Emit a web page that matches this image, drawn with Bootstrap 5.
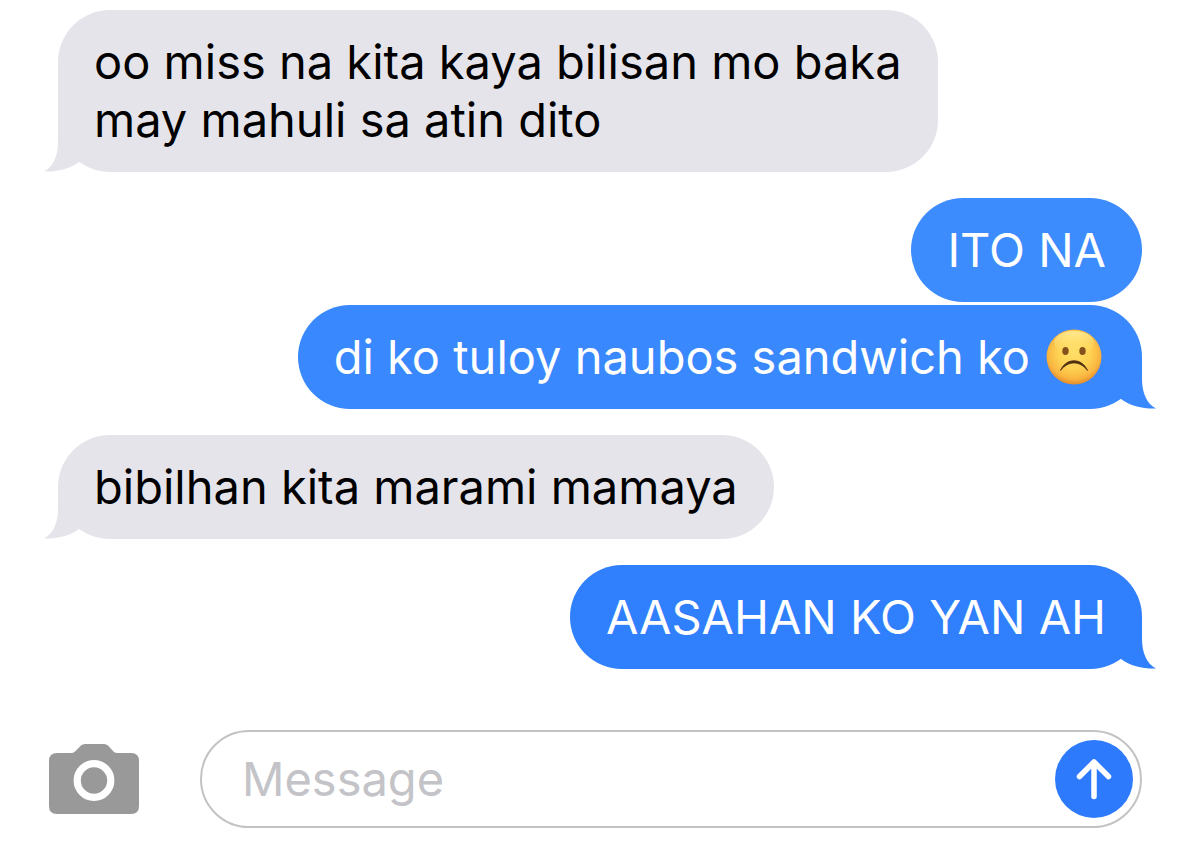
<!DOCTYPE html>
<html lang="tl"><head><meta charset="utf-8"><meta name="viewport" content="width=device-width, initial-scale=1"><title>Messages</title>
<link rel="stylesheet" href="https://cdn.jsdelivr.net/npm/bootstrap@5.3.0/dist/css/bootstrap.min.css">
<style>
body{font-family:Inter,"Liberation Sans",sans-serif;background:#fff;color:#000}
.chat{padding:10px 58px 0}
.bubble{position:relative;isolation:isolate;font-size:47px;line-height:58px;padding:23px 36px;border-radius:52px;margin-bottom:26px}
.bubble.followed{margin-bottom:3px}
.received{background:#e5e4eb;color:#e5e4eb;max-width:880px}
.received .words{color:#000}
.sent{background:#3d8cfd;color:#3d8cfd}
.sent .words{color:#fff}
.sent.mid{background:#3988fd;color:#3988fd}
.sent.late{background:#307ffc;color:#307ffc}
.tail{position:absolute;z-index:-1;bottom:0;left:-14px;width:66px;height:52px;fill:currentColor}
.sent .tail{left:auto;right:-14px;transform:scaleX(-1)}
.face{width:56px;height:56px;margin:0 4px 0 16px}
.composer{padding:35px 58px 15px 49px;gap:61px}
.camera{width:90px;height:70px;color:#999}
.field{height:98px;border:2px solid #c3c3c6;padding:0 7px 0 40px}
.field input{font-size:47px;line-height:58px;color:#000;outline:0}
.field input::placeholder{color:#c3c3c8;opacity:1}
.send{width:78px;height:78px;background:#2e7afd}
</style></head><body>
<main class="chat d-flex flex-column">
<div class="bubble received align-self-start"><span class="words">oo miss na kita kaya bilisan mo baka may mahuli sa atin dito</span>
<svg class="tail" viewBox="0 0 66 52" aria-hidden="true"><path d="M14 0V22C14 36 9 47 0 51.500C12 52 26 49 35 42L66 0Z"/></svg></div>
<div class="bubble sent followed align-self-end"><span class="words">ITO NA</span></div>
<div class="bubble sent mid d-flex align-items-center align-self-end"><span class="words">di ko tuloy naubos sandwich ko</span>
<svg class="face flex-shrink-0" viewBox="0 0 56 56" role="img" aria-label="Frowning face">
<defs>
<radialGradient id="skin" cx=".5" cy=".42" r=".6"><stop offset="0" stop-color="#ffdf68"/><stop offset=".5" stop-color="#fed152"/><stop offset=".8" stop-color="#f9b440"/><stop offset="1" stop-color="#df8426"/></radialGradient>
<linearGradient id="shine" x2="0" y2="1"><stop offset="0" stop-color="#fff8b0" stop-opacity=".7"/><stop offset="1" stop-color="#ffe36c" stop-opacity="0"/></linearGradient>
</defs>
<circle cx="28" cy="28" r="27.500" fill="url(#skin)"/>
<ellipse cx="28" cy="14" rx="20" ry="12" fill="url(#shine)"/>
<ellipse cx="19.500" cy="22" rx="3.200" ry="4" fill="#85501c"/><ellipse cx="36.500" cy="22" rx="3.200" ry="4" fill="#85501c"/>
<path d="M14.500 41.500C20 28.500 36 28.500 41.500 41.500C34 31.500 22 31.500 14.500 41.500Z" fill="#4f2f12" stroke="#4f2f12" stroke-width=".8" stroke-linejoin="round"/>
</svg>
<svg class="tail" viewBox="0 0 66 52" aria-hidden="true"><path d="M14 0V22C14 36 9 47 0 51.500C12 52 26 49 35 42L66 0Z"/></svg></div>
<div class="bubble received align-self-start"><span class="words">bibilhan kita marami mamaya</span>
<svg class="tail" viewBox="0 0 66 52" aria-hidden="true"><path d="M14 0V22C14 36 9 47 0 51.500C12 52 26 49 35 42L66 0Z"/></svg></div>
<div class="bubble sent late align-self-end"><span class="words">AASAHAN KO YAN AH</span>
<svg class="tail" viewBox="0 0 66 52" aria-hidden="true"><path d="M14 0V22C14 36 9 47 0 51.500C12 52 26 49 35 42L66 0Z"/></svg></div>
</main>
<form class="composer d-flex align-items-center">
<button type="button" class="camera btn p-0 border-0 d-flex flex-shrink-0" aria-label="Camera">
<svg viewBox="0 0 90 70" width="90" height="70" aria-hidden="true"><path fill="currentColor" d="M8 9H22Q24.500 9 26 7.500L32 1.500Q33.500 0 36 0H55Q57.500 0 59 1.500L64.500 7.500Q66 9 68.500 9H82Q90 9 90 17V62Q90 70 82 70H8Q0 70 0 62V17Q0 9 8 9Z"/><circle cx="45" cy="36.500" r="16.800" fill="none" stroke="#fff" stroke-width="7.200"/></svg></button>
<div class="field d-flex align-items-center flex-grow-1 rounded-pill">
<input class="border-0 bg-transparent p-0 flex-grow-1 w-100" type="text" placeholder="Message" aria-label="Message">
<button type="submit" class="send btn p-0 border-0 rounded-circle d-flex flex-shrink-0" aria-label="Send">
<svg viewBox="0 0 78 78" width="78" height="78" fill="none" stroke="#fff" stroke-width="5.500" stroke-linecap="round" stroke-linejoin="round" aria-hidden="true"><path d="M39 56.500V22M24.500 36.500L39 22L53.500 36.500"/></svg></button>
</div>
</form>
<script src="https://cdn.jsdelivr.net/npm/bootstrap@5.3.0/dist/js/bootstrap.bundle.min.js"></script>
</body></html>
